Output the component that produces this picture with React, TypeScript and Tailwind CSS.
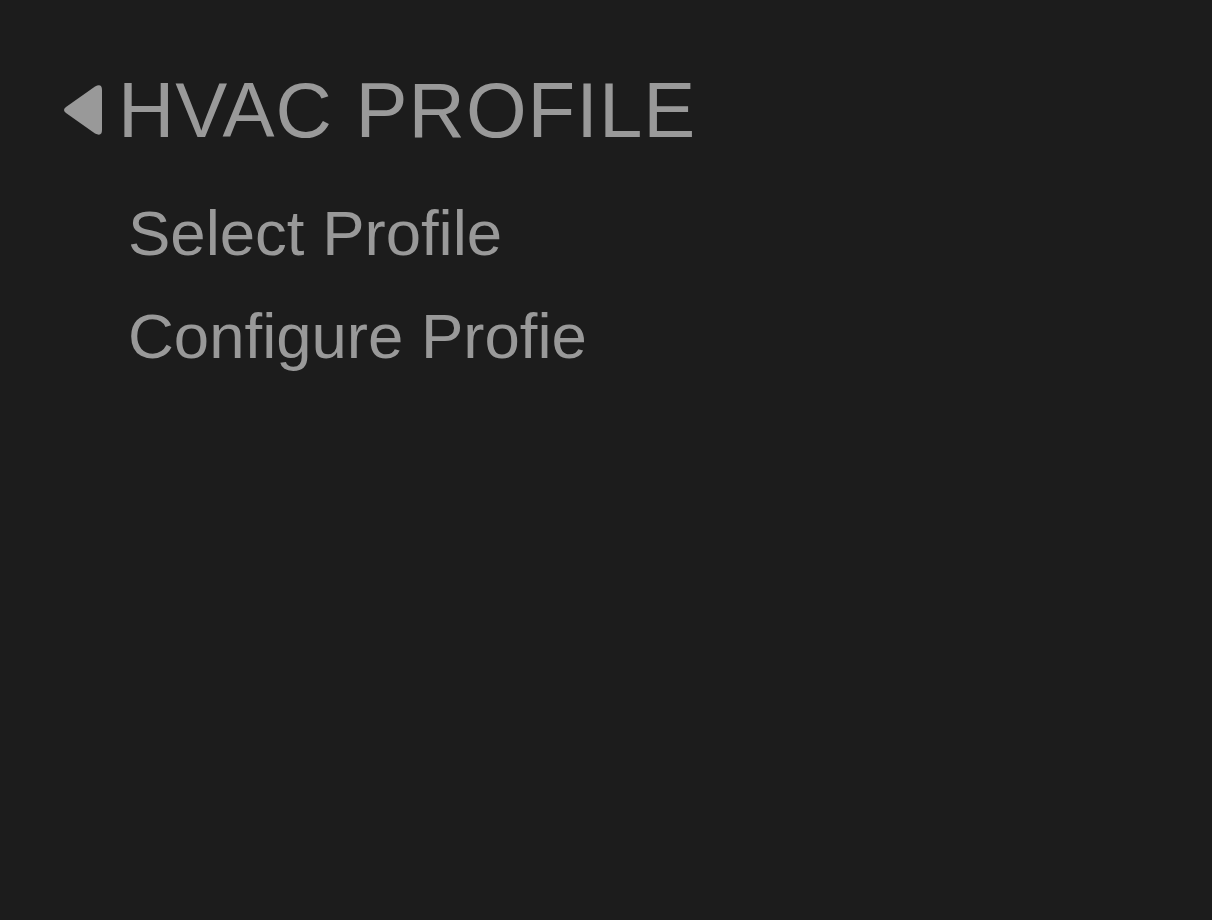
const items = ["Select Profile", "Configure Profie"];

const App = () => {
    return (
        <div className="w-[1212px] h-[920px] bg-[#1c1c1c] text-[#999999] pt-[62px] pl-[61px]" style={{fontFamily: '"Liberation Sans", Arial, sans-serif'}}>
            <div className="flex items-center">
                <svg width="42" height="50" viewBox="0 0 42 50" className="mr-[15px]">
                    <path d="M5 22 L34 1.5 Q41 -2 41 5 L41 45 Q41 52 34 48.5 L5 28 Q1 25 5 22 Z" fill="#999999"/>
                </svg>
                <h1 className="text-[78px] leading-[96px] tracking-[1px]">HVAC PROFILE</h1>
            </div>
            <ul className="pl-[67px] mt-[24px]">
                {items.map(item => (
                    <li key={item} className="text-[63.5px] leading-[103px]">{item}</li>
                ))}
            </ul>
        </div>
    );
};

export default App;
